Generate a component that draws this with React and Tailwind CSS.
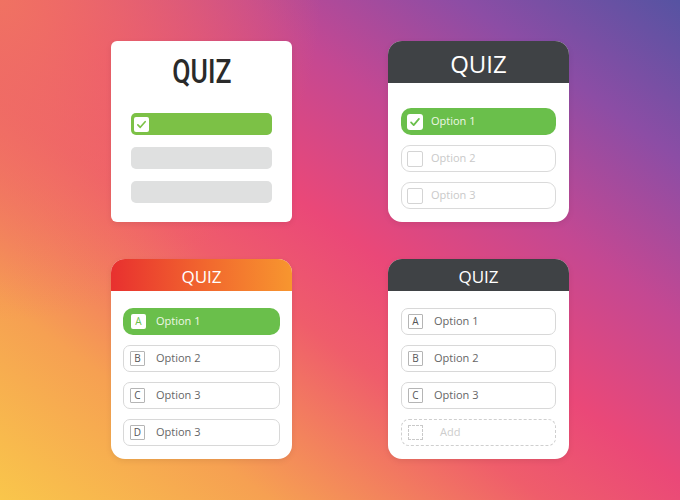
const Check = ({ color = "#6cbf45" }) => (
  <svg viewBox="0 0 16 16" className="w-full h-full">
    <path
      d="M3.5 8.5l3 3 6-7"
      fill="none"
      stroke={color}
      strokeWidth="2"
      strokeLinecap="round"
      strokeLinejoin="round"
    />
  </svg>
);

const CheckRow = ({ label, checked }) => (
  <div
    className={
      checked
        ? "h-[27px] rounded-[10px] bg-[#6abf4b] flex items-center pl-[6px] gap-[8px]"
        : "h-[27px] rounded-[9px] border-[1.5px] border-[#dadada] bg-white flex items-center pl-[5px] gap-[8px]"
    }
  >
    <div
      className={
        checked
          ? "w-[16px] h-[16px] rounded-[3px] bg-white p-[1px]"
          : "w-[16px] h-[16px] rounded-[2px] border-[1.5px] border-[#d4d4d4]"
      }
    >
      {checked && <Check color="#6abf4b" />}
    </div>
    <span
      className={
        checked
          ? "text-[11px] text-[#eef8e6] font-['Open_Sans',sans-serif]"
          : "text-[11px] text-[#c9c9c9] font-['Open_Sans',sans-serif]"
      }
    >
      {label}
    </span>
  </div>
);

const LetterRow = ({ letter, label, active, dashed }) => {
  if (dashed) {
    return (
      <div className="h-[27px] rounded-[8px] border-[1.5px] border-dashed border-[#cfcfcf] bg-white flex items-center pl-[6px] gap-[17px]">
        <div className="w-[15px] h-[15px] border-[1.5px] border-dashed border-[#c9c9c9]" />
        <span className="text-[11px] text-[#cdcdcd] font-['Open_Sans',sans-serif]">
          {label}
        </span>
      </div>
    );
  }
  return (
    <div
      className={
        active
          ? "h-[27px] rounded-[10px] bg-[#6abf4b] flex items-center pl-[8px] gap-[10px]"
          : "h-[27px] rounded-[7px] border-[1.5px] border-[#d8d8d8] bg-white flex items-center pl-[6px] gap-[11px]"
      }
    >
      <div
        className={
          active
            ? "w-[15px] h-[15px] rounded-[2px] bg-white flex items-center justify-center text-[10px] text-[#6abf4b] font-['Open_Sans',sans-serif]"
            : "w-[15px] h-[15px] rounded-[1px] border border-[#b5b5b5] flex items-center justify-center text-[10px] text-[#555] font-['Open_Sans',sans-serif]"
        }
      >
        {letter}
      </div>
      <span
        className={
          active
            ? "text-[11px] text-[#eef8e6] font-['Open_Sans',sans-serif]"
            : "text-[11px] text-[#666] font-['Open_Sans',sans-serif]"
        }
      >
        {label}
      </span>
    </div>
  );
};

export default function App() {
  return (
    <div className="w-[680px] h-[500px] overflow-hidden bg-[radial-gradient(circle_at_0%_0%,#f07262_0%,rgba(240,114,98,0)_38%),linear-gradient(to_top_right,#f9c64b_0%,#f6a052_20%,#ef5d6b_40%,#ea4878_52%,#c44892_68%,#8c4da5_84%,#5653a2_100%)] pt-[41px] pl-[111px]">
      <div className="grid grid-cols-[181px_181px] grid-rows-[181px_200px] gap-x-[96px] gap-y-[37px]">
        {/* card 1 */}
        <div className="bg-white rounded-[6px] shadow-[0_2px_6px_rgba(0,0,0,0.08)] px-[20px] flex flex-col">
          <div className="h-[72px] flex items-start justify-center pt-[13px]">
            <span className="text-[34px] leading-none font-medium text-[#2a2a2a] font-['Roboto',sans-serif] scale-x-[0.78] inline-block">
              QUIZ
            </span>
          </div>
          <div className="flex flex-col gap-[12px]">
            <div className="h-[22px] rounded-[5px] bg-[#7cc146] flex items-center pl-[3px]">
              <div className="w-[15px] h-[15px] rounded-[2px] bg-white p-[1px]">
                <Check color="#7cc146" />
              </div>
            </div>
            <div className="h-[22px] rounded-[5px] bg-[#dfe0e0]" />
            <div className="h-[22px] rounded-[5px] bg-[#dfe0e0]" />
          </div>
        </div>

        {/* card 2 */}
        <div className="bg-white rounded-[14px] overflow-hidden shadow-[0_2px_6px_rgba(0,0,0,0.08)] flex flex-col">
          <div className="h-[42px] bg-[#3f4245] flex items-center justify-center pt-[4px]">
            <span className="text-[24px] leading-none text-white font-['Open_Sans',sans-serif]">
              QUIZ
            </span>
          </div>
          <div className="px-[13px] pt-[25px] flex flex-col gap-[10px]">
            <CheckRow label="Option 1" checked />
            <CheckRow label="Option 2" />
            <CheckRow label="Option 3" />
          </div>
        </div>

        {/* card 3 */}
        <div className="bg-white rounded-[14px] overflow-hidden shadow-[0_2px_6px_rgba(0,0,0,0.08)] flex flex-col">
          <div className="h-[32px] bg-[linear-gradient(to_right,#e8302f,#f26a2e_55%,#f7962f)] flex items-center justify-center pt-[2px]">
            <span className="text-[17px] leading-none text-white font-['Open_Sans',sans-serif]">
              QUIZ
            </span>
          </div>
          <div className="px-[12px] pt-[17px] flex flex-col gap-[10px]">
            <LetterRow letter="A" label="Option 1" active />
            <LetterRow letter="B" label="Option 2" />
            <LetterRow letter="C" label="Option 3" />
            <LetterRow letter="D" label="Option 3" />
          </div>
        </div>

        {/* card 4 */}
        <div className="bg-white rounded-[14px] overflow-hidden shadow-[0_2px_6px_rgba(0,0,0,0.08)] flex flex-col">
          <div className="h-[32px] bg-[#3f4245] flex items-center justify-center pt-[2px]">
            <span className="text-[17px] leading-none text-white font-['Open_Sans',sans-serif]">
              QUIZ
            </span>
          </div>
          <div className="px-[13px] pt-[17px] flex flex-col gap-[10px]">
            <LetterRow letter="A" label="Option 1" />
            <LetterRow letter="B" label="Option 2" />
            <LetterRow letter="C" label="Option 3" />
            <LetterRow label="Add" dashed />
          </div>
        </div>
      </div>
    </div>
  );
}
